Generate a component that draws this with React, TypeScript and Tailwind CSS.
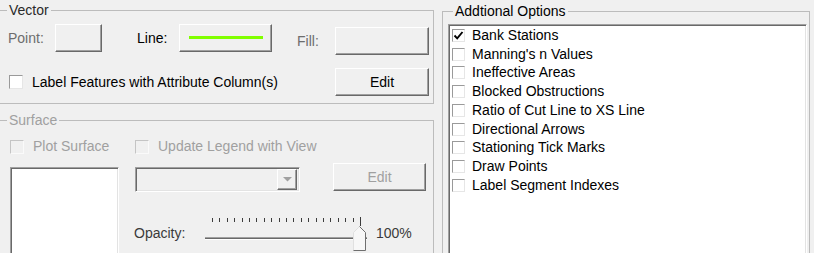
import React from "react";

const raised =
  "bg-[#f0f0f0] border border-t-white border-l-white border-r-[#696969] border-b-[#696969] shadow-[inset_-1px_-1px_0_#a0a0a0]";
const sunken =
  "border border-t-[#a0a0a0] border-l-[#a0a0a0] border-r-white border-b-white shadow-[inset_1px_1px_0_#696969,inset_-1px_-1px_0_#e3e3e3]";
const groupBorder = "border border-[#bcbcbc]";

const options = [
  { label: "Bank Stations", checked: true },
  { label: "Manning's n Values", checked: false },
  { label: "Ineffective Areas", checked: false },
  { label: "Blocked Obstructions", checked: false },
  { label: "Ratio of Cut Line to XS Line", checked: false },
  { label: "Directional Arrows", checked: false },
  { label: "Stationing Tick Marks", checked: false },
  { label: "Draw Points", checked: false },
  { label: "Label Segment Indexes", checked: false },
];

function CheckBox({ checked = false, disabled = false, small = false }: { checked?: boolean; disabled?: boolean; small?: boolean }) {
  const size = small ? "w-[13px] h-[13px]" : "w-[14px] h-[14px]";
  const tone = disabled
    ? "bg-[#f0f0f0] border-t-[#c4c4c4] border-l-[#c4c4c4] border-r-[#fafafa] border-b-[#fafafa]"
    : "bg-white border-t-[#9a9a9a] border-l-[#9a9a9a] border-r-[#e6e6e6] border-b-[#e6e6e6]";
  return (
    <span className={`${size} ${tone} border shrink-0 flex items-center justify-center`}>
      {checked && (
        <svg width="11" height="11" viewBox="0 0 11 11">
          <path d="M1.5 5.5 L4.2 8.3 L9.5 2" fill="none" stroke="#000" strokeWidth="1.9" />
        </svg>
      )}
    </span>
  );
}

function Slider() {
  const ticks = Array.from({ length: 21 }, (_, i) => 8 + i * 7.4);
  return (
    <svg width="166" height="36" viewBox="0 0 166 36" className="shrink-0">
      {ticks.map((x, i) => (
        <rect key={i} x={Math.round(x)} y={i === 20 ? 1 : 2} width="1" height={i === 20 ? 9 : 4} fill="#3c3c3c" />
      ))}
      <rect x="1" y="21" width="162" height="1" fill="#a0a0a0" />
      <rect x="1" y="22" width="162" height="1" fill="#696969" />
      <rect x="1" y="23" width="162" height="1" fill="#ffffff" />
      <path d="M149.5 16.5 L155.5 10.5 L161.5 16.5 L161.5 34.5 L149.5 34.5 Z" fill="#f7f7f7" />
      <path d="M149.5 34.5 L149.5 16.5 L155.5 10.5" fill="none" stroke="#e0e0e0" />
      <path d="M155.5 10.5 L161.5 16.5 L161.5 34.5 L149.5 34.5" fill="none" stroke="#6f6f6f" />
    </svg>
  );
}

export default function App() {
  return (
    <div className="w-[814px] h-[253px] overflow-hidden bg-[#f0f0f0] flex font-['Liberation_Sans',Arial,sans-serif] text-[14px] leading-[15px] text-black">
      {/* left column */}
      <div className="w-[435px] -ml-px shrink-0 flex flex-col pt-[3px]">
        <fieldset className={`${groupBorder} h-[101px] shrink-0`}>
          <legend className="ml-[7px] px-[2px] text-[#2a2a2a]">Vector</legend>
          <div className="mt-[6px] flex items-start h-[28px]">
            <span className="ml-[8px] w-[47px] h-[28px] flex items-center text-[#6d6d6d]">Point:</span>
            <span className={`${raised} w-[47px] h-[28px]`} />
            <span className="ml-[35px] w-[42px] h-[28px] flex items-center">Line:</span>
            <span className={`${raised} w-[93px] h-[28px] flex items-center justify-center`}>
              <span className="w-[74px] h-[3px] bg-[#80ff00] -mt-[2px]" />
            </span>
            <div className="mt-[3px] ml-[25px] flex items-center h-[28px]">
              <span className="w-[38px] text-[#6d6d6d]">Fill:</span>
              <span className={`${raised} w-[94px] h-[28px]`} />
            </div>
          </div>
          <div className="mt-[16px] flex items-center h-[28px]">
            <span className="ml-[9px]">
              <CheckBox />
            </span>
            <span className="ml-[9px]">Label Features with Attribute Column(s)</span>
            <span className={`${raised} ml-auto mr-[4px] w-[94px] h-[28px] flex items-center justify-center`}>Edit</span>
          </div>
        </fieldset>

        <fieldset className={`${groupBorder} mt-[9px] h-[160px] shrink-0`}>
          <legend className="ml-[7px] px-[2px] text-[#a0a0a0]">Surface</legend>
          <div className="mt-[11px] flex items-center h-[15px] text-[#a0a0a0]">
            <div className="ml-[10px] w-[125px] flex items-center">
              <CheckBox disabled />
              <span className="ml-[9px]">Plot Surface</span>
            </div>
            <CheckBox disabled />
            <span className="ml-[9px]">Update Legend with View</span>
          </div>
          <div className="mt-[9px] flex items-start">
            <div className={`${sunken} ml-[10px] mt-[4px] w-[109px] h-[100px] bg-white`} />
            <div className="ml-[16px] flex flex-col">
              <div className="flex items-start h-[29px]">
                <div className={`${sunken} mt-[4px] w-[165px] h-[25px] flex justify-end items-center pr-[2px]`}>
                  <span className={`${raised} w-[20px] h-[21px] flex items-center justify-center`}>
                    <svg width="9" height="5" viewBox="0 0 9 5">
                      <path d="M0 0 H9 L4.5 4.5 Z" fill="#a0a0a0" />
                    </svg>
                  </span>
                </div>
                <span className={`${raised} ml-[33px] w-[93px] h-[28px] flex items-center justify-center text-[#a0a0a0]`}>Edit</span>
              </div>
              <div className="mt-[24px] -ml-px flex items-start h-[36px] text-[#3a3a3a]">
                <span className="mt-[10px] w-[70px]">Opacity:</span>
                <Slider />
                <span className="mt-[10px] ml-[6px]">100%</span>
              </div>
            </div>
          </div>
        </fieldset>
      </div>

      {/* right column */}
      <div className="ml-[8px] pt-[4px] shrink-0">
        <fieldset className={`${groupBorder} w-[368px] h-[260px]`}>
          <legend className="ml-[10px] px-[2px]">Addtional Options</legend>
          <div className={`${sunken} ml-[5px] mt-[5px] w-[359px] h-[240px] bg-white p-px`}>
            <div className="flex flex-col">
              {options.map((o) => (
                <div key={o.label} className="h-[18.75px] flex items-center">
                  <span className="ml-[2px]">
                    <CheckBox small checked={o.checked} />
                  </span>
                  <span className="ml-[7px]">{o.label}</span>
                </div>
              ))}
            </div>
          </div>
        </fieldset>
      </div>
    </div>
  );
}
